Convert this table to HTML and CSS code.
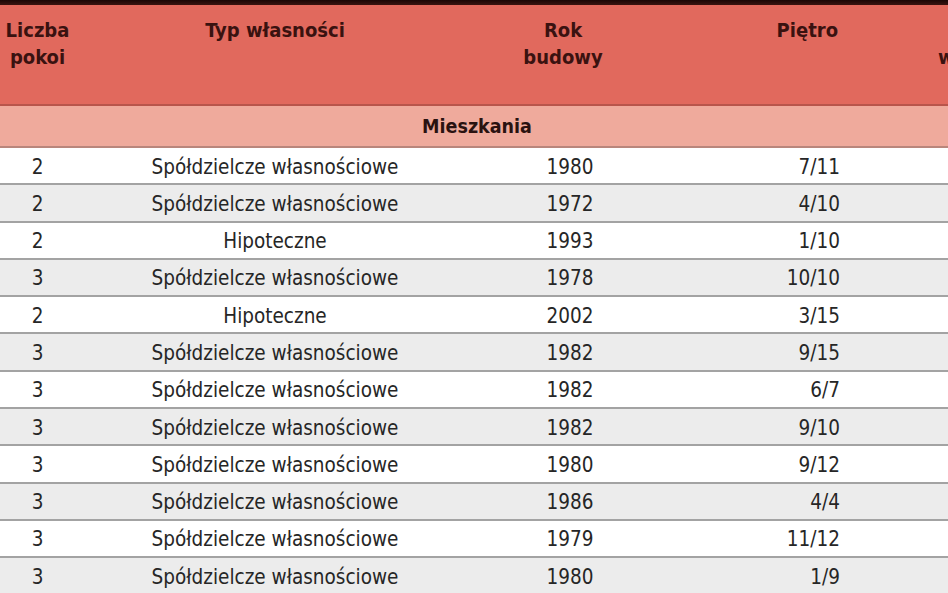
FILE: index.html
```html
<!DOCTYPE html>
<html lang="pl">
<head>
<meta charset="utf-8">
<title>Mieszkania</title>
<link rel="stylesheet" href="styles.css">
</head>
<body>
<div class="table">
  <div class="topbar"></div>
  <div class="row head">
    <div class="c c1">Liczba<br>pokoi</div>
    <div class="c c2">Typ własności</div>
    <div class="c c3">Rok<br>budowy</div>
    <div class="c c4">Piętro</div>
    <div class="c c5">Cena<br>w tys. zł</div>
  </div>
  <div class="section">Mieszkania</div>
  <div class="row data"><div class="c c1">2</div><div class="c c2">Spółdzielcze własnościowe</div><div class="c c3">1980</div><div class="c c4">7/11</div><div class="c c5"></div></div>
  <div class="row data alt"><div class="c c1">2</div><div class="c c2">Spółdzielcze własnościowe</div><div class="c c3">1972</div><div class="c c4">4/10</div><div class="c c5"></div></div>
  <div class="row data"><div class="c c1">2</div><div class="c c2">Hipoteczne</div><div class="c c3">1993</div><div class="c c4">1/10</div><div class="c c5"></div></div>
  <div class="row data alt"><div class="c c1">3</div><div class="c c2">Spółdzielcze własnościowe</div><div class="c c3">1978</div><div class="c c4">10/10</div><div class="c c5"></div></div>
  <div class="row data"><div class="c c1">2</div><div class="c c2">Hipoteczne</div><div class="c c3">2002</div><div class="c c4">3/15</div><div class="c c5"></div></div>
  <div class="row data alt"><div class="c c1">3</div><div class="c c2">Spółdzielcze własnościowe</div><div class="c c3">1982</div><div class="c c4">9/15</div><div class="c c5"></div></div>
  <div class="row data"><div class="c c1">3</div><div class="c c2">Spółdzielcze własnościowe</div><div class="c c3">1982</div><div class="c c4">6/7</div><div class="c c5"></div></div>
  <div class="row data alt"><div class="c c1">3</div><div class="c c2">Spółdzielcze własnościowe</div><div class="c c3">1982</div><div class="c c4">9/10</div><div class="c c5"></div></div>
  <div class="row data"><div class="c c1">3</div><div class="c c2">Spółdzielcze własnościowe</div><div class="c c3">1980</div><div class="c c4">9/12</div><div class="c c5"></div></div>
  <div class="row data alt"><div class="c c1">3</div><div class="c c2">Spółdzielcze własnościowe</div><div class="c c3">1986</div><div class="c c4">4/4</div><div class="c c5"></div></div>
  <div class="row data"><div class="c c1">3</div><div class="c c2">Spółdzielcze własnościowe</div><div class="c c3">1979</div><div class="c c4">11/12</div><div class="c c5"></div></div>
  <div class="row data alt"><div class="c c1">3</div><div class="c c2">Spółdzielcze własnościowe</div><div class="c c3">1980</div><div class="c c4">1/9</div><div class="c c5"></div></div>
</div>
</body>
</html>
```
FILE: styles.css
```css
html, body {
  margin: 0;
  padding: 0;
  background: #ffffff;
  overflow: hidden;
}
.table {
  width: 1080px;
  font-family: "DejaVu Sans Condensed", "DejaVu Sans", sans-serif;
  color: #262626;
}
.topbar {
  height: 5px;
  background: linear-gradient(#1a0605, #3a1410);
}
.row {
  display: grid;
  grid-template-columns: 75px 400px 176px 219px 210px;
}
.head {
  height: 101px;
  box-sizing: border-box;
  background: #e1695d;
  border-bottom: 2px solid #b8554b;
  color: #3a1210;
  font-weight: bold;
  font-size: 20px;
  line-height: 27px;
}
.head .c {
  padding-top: 12px;
}
.section {
  width: 954px;
  height: 42px;
  box-sizing: border-box;
  background: #efaa9c;
  border-bottom: 2px solid #b9867c;
  font-weight: bold;
  font-size: 19.5px;
  padding-top: 1px;
  line-height: 39px;
  color: #2a1210;
  text-align: center;
}
.data {
  height: 37.3px;
  box-sizing: border-box;
  border-bottom: 2px solid #a3a3a3;
  font-size: 20.5px;
  padding-top: 3.5px;
  line-height: 31.8px;
  background: #ffffff;
}
.data.alt {
  background: #ececec;
}
.c1, .c2, .c3, .c5 {
  text-align: center;
}
.data .c3 {
  padding-left: 14px;
}
.c4 {
  text-align: right;
}
.head .c4 {
  padding-right: 32px;
}
.data .c4 {
  padding-right: 30px;
}
.head .c5 {
  padding-left: 10px;
}
```
